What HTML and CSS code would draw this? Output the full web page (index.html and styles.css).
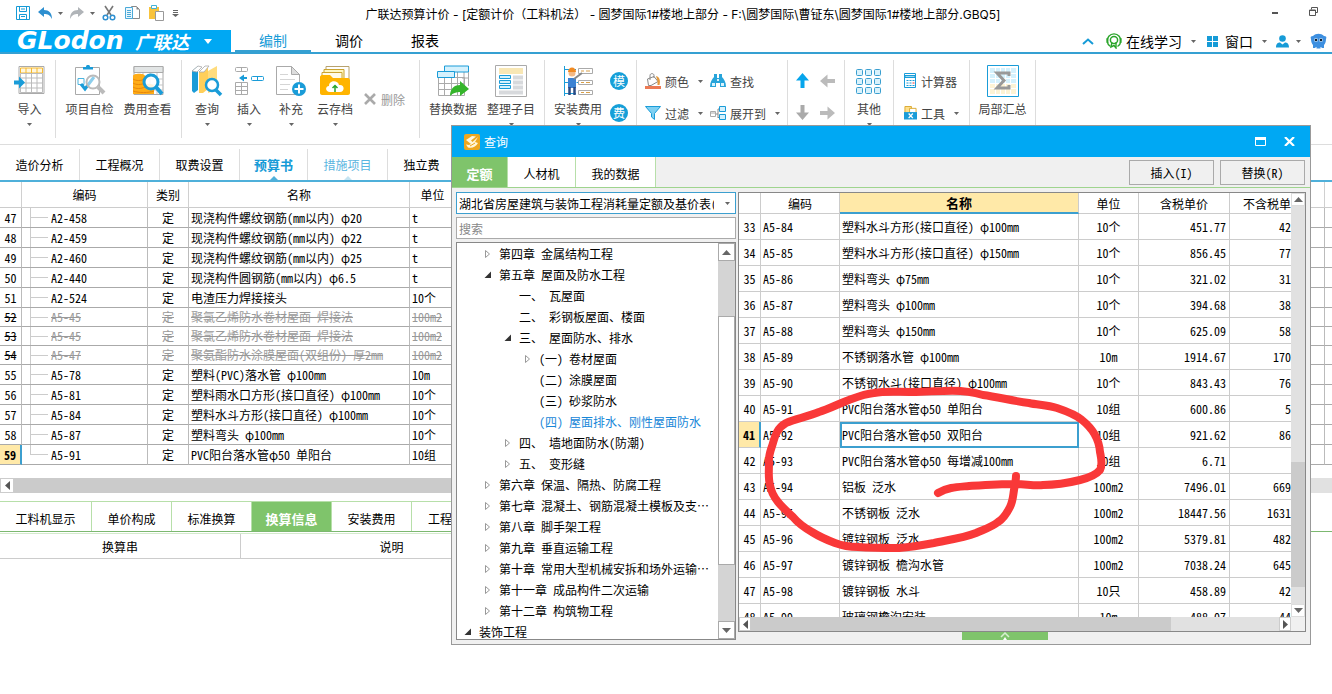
FILE: index.html
```html
<!DOCTYPE html>
<html lang="zh-CN">
<head>
<meta charset="utf-8">
<title>广联达预算计价</title>
<link rel="stylesheet" href="styles.css">
</head>
<body>
<svg class="defs" width="0" height="0" aria-hidden="true">
  <symbol id="caret" viewBox="0 0 5 3"><path d="M0 0h5L2.500 3z" fill="#666"/></symbol>
  <symbol id="shut" viewBox="0 0 8 10"><path d="M1.500 1.500v7l4-3.500z" fill="#fff" stroke="#999"/></symbol>
  <symbol id="open" viewBox="0 0 8 10"><path d="M7 1.500v6.500H.500z" fill="#333"/></symbol>
</svg>
<div class="app">
  <header class="titlebar">
    <div class="quick">
      <button aria-label="保存"><svg width="16" height="16" viewBox="0 0 16 16" fill="none" stroke="#169bd7"><path d="M1.500 1.500h13v13h-13z"/><path d="M4.500 1.500v5h7v-5M4.500 14.500v-5h7v5M6 11.500h4M6 4h4"/></svg></button>
      <button aria-label="撤销"><svg width="15" height="13" viewBox="0 0 15 13"><path d="M0 5l6-5v3c5 0 8 3 8 9-2-4-4-5-8-5v3z" fill="#2d8fd0"/></svg></button>
      <svg class="caret" width="5" height="3"><use href="#caret"/></svg>
      <button aria-label="恢复"><svg width="15" height="13" viewBox="0 0 15 13"><path d="M14 5L8 0v3C3 3 0 6 0 12c2-4 4-5 8-5v3z" fill="#b0b4b8"/></svg></button>
      <svg class="caret" width="5" height="3"><use href="#caret"/></svg>
      <button class="wide" aria-label="剪切"><svg width="14" height="16" viewBox="0 0 14 16" fill="none"><path d="M3 1l6 9M11 1L5 10" stroke="#777" stroke-width="1.600"/><circle cx="3.500" cy="12.500" r="2.300" stroke="#2d8fd0" stroke-width="1.500"/><circle cx="10.500" cy="12.500" r="2.300" stroke="#2d8fd0" stroke-width="1.500"/></svg></button>
      <button class="wide" aria-label="复制"><svg width="16" height="16" viewBox="0 0 16 16"><path d="M7.500 1.500h5l3 3v9h-8z" fill="#fff" stroke="#888"/><path d="M12.500 1.500v3h3z" fill="#888"/><path d="M1.500 2.500h7v11h-7z" fill="#eaf7fd" stroke="#4ba9d8"/><path d="M3 5.500h4M3 7.500h4M3 9.500h4M3 11.500h4" stroke="#4ba9d8"/></svg></button>
      <button class="wide" aria-label="粘贴"><svg width="16" height="16" viewBox="0 0 16 16"><path d="M1 2h10v12H1z" fill="#f8c33c"/><path d="M3.500.500h5v3h-5z" fill="#fff" stroke="#42b3d8"/><path d="M7.500 6.500h8v9h-8z" fill="#fff" stroke="#999"/></svg></button>
      <button aria-label="更多"><svg width="7" height="7" viewBox="0 0 7 7"><path d="M1 .500h5M1 2.500h5" stroke="#666"/><path d="M0 4h7L3.500 7z" fill="#666"/></svg></button>
    </div>
    <h1>广联达预算计价 - [定额计价（工料机法） - 圆梦国际1#楼地上部分 - F:\圆梦国际\曹钲东\圆梦国际1#楼地上部分.GBQ5]</h1>
    <div class="winctl">
      <button aria-label="最小化"><svg width="7" height="8" viewBox="0 0 7 8"><path d="M0 5h6v2H0z" fill="#555"/></svg></button>
      <button aria-label="还原"><svg width="9" height="9" viewBox="0 0 9 9" fill="none" stroke="#555"><path d="M2.500 2.500v-2h6v5h-2"/><path d="M.500 3h6v5.500h-6z"/><path d="M.500 3.500h6"/></svg></button>
    </div>
  </header>

  <nav class="menubar">
    <button class="brand"><span class="brand-en">GLodon</span><span class="brand-cn">广联达</span><svg width="8" height="5" viewBox="0 0 8 5"><path d="M0 0h8L4 5z" fill="#fff"/></svg></button>
    <div class="maintabs">
      <button class="on">编制</button><button>调价</button><button>报表</button>
    </div>
    <div class="tools">
      <button class="t-up" aria-label="收起"><svg width="12" height="7" viewBox="0 0 12 7" fill="none"><path d="M1 6l5-4.500L11 6" stroke="#169bd7" stroke-width="2"/></svg></button>
      <button class="t-learn"><svg width="16" height="16" viewBox="0 0 16 16" fill="none" stroke="#2ba52b"><path d="M4.500 13.500A6.800 6.800 0 1 1 11.500 13.500" stroke-width="1.400"/><circle cx="8" cy="7" r="3.600" stroke-width="1.500"/><path d="M1.500 5v5M14.500 5v5" stroke-width="1.800"/><path d="M6 9l-1 5 3-1.500L10 15v-6" stroke-width="1.400"/></svg>在线学习<svg class="caret" width="5" height="3"><use href="#caret"/></svg></button>
      <button class="t-win"><svg width="11" height="11" viewBox="0 0 11 11" fill="#169bd7"><path d="M0 0h5v5H0zM6 0h5v5H6zM0 6h5v5H0zM6 6h5v5H6z"/></svg>窗口<svg class="caret" width="5" height="3"><use href="#caret"/></svg></button>
      <button class="t-user" aria-label="用户"><svg width="13" height="13" viewBox="0 0 13 13"><circle cx="6.500" cy="3.500" r="3.300" fill="#169bd7"/><path d="M0 12.500c0-4 2-5 4-5l2.500 2L9 7.500c2 0 4 1 4 5z" fill="#169bd7"/></svg><svg class="caret" width="5" height="3"><use href="#caret"/></svg></button>
      <button aria-label="助手"><svg width="17" height="16" viewBox="0 0 17 16"><path d="M1 6c-1-2 0-3 2-3 3-3 8-3 11 0 2 0 3 1 2 3 0 3-1 5-2 6v3h-2.500v-1h-1v1.500h-4V14h-1v1H3v-3C2 11 1 9 1 6z" fill="#3d8fe0"/><circle cx="6" cy="7" r="2" fill="#bfe0ff"/><circle cx="11" cy="7" r="2" fill="#bfe0ff"/><circle cx="6" cy="7" r="1.300" fill="#123"/><circle cx="11" cy="7" r="1.300" fill="#123"/></svg></button>
    </div>
  </nav>

  <section class="ribbon">
    <div class="group g-import">
      <button class="big"><svg width="32" height="32" viewBox="0 0 32 32"><path d="M5 1.500h25v27H5z" fill="#fff" stroke="#aaa"/><path d="M6.500 3h22v5h-22z" fill="#fff6dc" stroke="#f5b82e"/><path d="M6.500 8.500h22v19h-22z" fill="none" stroke="#bbb"/><path d="M6.500 13h22M6.500 18h22M6.500 23h22M12 8v19M17.500 8v19M23 8v19" stroke="#bbb"/><path d="M12 3v5M17.500 3v5M23 3v5" stroke="#f5b82e"/><path d="M0 15.500h5v-4l6 6-6 6v-4H0z" fill="#1a9cd8"/></svg><span>导入</span><svg class="caret" width="5" height="3"><use href="#caret"/></svg></button>
    </div>
    <div class="group g-check">
      <button class="big mid"><svg width="32" height="32" viewBox="0 0 32 32"><path d="M1.500 2.500h24v27h-24z" fill="#fff" stroke="#aaa"/><path d="M9 4.500V2h3c0-3 4-3 4 0h3v2.500z" fill="#1a9cd8"/><path d="M4 13.500h6v6H4z" fill="#fff" stroke="#4bb4df"/><path d="M7 19l4 5 9-12" fill="none" stroke="#1a9cd8" stroke-width="3"/><circle cx="19" cy="17" r="6.500" fill="#fff" fill-opacity=".5" stroke="#bbb" stroke-width="2"/><path d="M24 22l6 6" stroke="#bbb" stroke-width="4"/></svg><span>项目自检</span></button>
      <button class="big mid"><svg width="32" height="32" viewBox="0 0 32 32"><path d="M2 1.500h29v28H2z" fill="#fff" stroke="#aaa"/><path d="M2 1.500h29v6H2z" fill="#e2e5e5" stroke="#aaa"/><path d="M11 8v21M18 8v21M25 8v21M11 14h20M11 20h20M11 25h20" stroke="#c5c5c5"/><path d="M1 11c0-3 12-3 12 0v8c5-1 9 0 9 3v7H1z" fill="#ffad17"/><path d="M1 14c3 2 8 2 12 0M1 18c3 2 8 2 12 0M1 22c3 2 8 2 12 0M1 26c6 2 15 2 21 0" fill="none" stroke="#e8860a"/><circle cx="19" cy="17" r="7" fill="#fff" fill-opacity=".85" stroke="#1a9cd8" stroke-width="3"/><path d="M24 22l6 7" stroke="#1a9cd8" stroke-width="4"/></svg><span>费用查看</span></button>
    </div>
    <div class="group g-query">
      <button class="big small"><svg width="32" height="32" viewBox="0 0 32 32"><path d="M1 6l6-5v24l-4 3-2-2z" fill="#1a9cd8"/><path d="M1 6l6-5 4 1-5 5z" fill="#fff" stroke="#aaa" stroke-width=".8"/><path d="M8 7l6-5 3 0v22l-5 4H8z" fill="#ffcf5a"/><path d="M17 6l9-5v24l-9 3z" fill="#ffdc7d"/><path d="M8 7l6-6h4l-5 6z" fill="#fff" stroke="#aaa" stroke-width=".8"/><circle cx="21" cy="20" r="6" fill="#fff" stroke="#1a9cd8" stroke-width="2.500"/><path d="M25 25l5 5" stroke="#1a9cd8" stroke-width="3.500"/></svg><span>查询</span><svg class="caret" width="5" height="3"><use href="#caret"/></svg></button>
      <button class="big small"><svg width="32" height="32" viewBox="0 0 32 32"><g fill="#fff" stroke="#aaa"><rect x="2.500" y="2.500" width="12" height="4" rx="1"/><path d="M8.500 2.500v4M2.500 17.500h12v12h-12zM8.500 17.500v12M2.500 21.500h12M2.500 25.500h12"/></g><path d="M6 13l5-3.500v2.500h3v2h-3v2.500z" fill="#1a9cd8"/><rect x="18.500" y="11.500" width="12" height="4" rx="1" fill="#fff" stroke="#1a9cd8"/><path d="M24.500 11.500v4" stroke="#1a9cd8"/></svg><span>插入</span><svg class="caret" width="5" height="3"><use href="#caret"/></svg></button>
      <button class="big small"><svg width="32" height="32" viewBox="0 0 32 32"><path d="M1.500 1.500h15l8 8v20h-23z" fill="#fff" stroke="#aaa"/><path d="M16.500 1.500v8h8z" fill="#ddd" stroke="#aaa"/><path d="M5 9.500h8M5 14.500h15M5 19.500h10M5 24.500h8" stroke="#d5d5d5"/><circle cx="24" cy="24" r="7" fill="#1a9cd8"/><path d="M24 19.500v9M19.500 24h9" stroke="#fff" stroke-width="2"/></svg><span>补充</span><svg class="caret" width="5" height="3"><use href="#caret"/></svg></button>
      <button class="big"><svg width="32" height="32" viewBox="0 0 32 32"><path d="M7 1.500h23V14H7z" fill="#fff" stroke="#b8a26d"/><path d="M5 4.500h20V16H5z" fill="#fff7c2" stroke="#cba431"/><path d="M3 7.500h20V18H3z" fill="#fffbe8" stroke="#cba431"/><path d="M1 12c0-1 1-2 2-2h8l3 3h15c1 0 2 1 2 2v13c0 1-1 2-2 2H3c-1 0-2-1-2-2z" fill="#ffb400"/><path d="M11 27c-5 0-5-6-1-6 0-6 9-6 10-1 6-1 6 7 1 7z" fill="#fff"/><path d="M16 27v-6M13.500 23l2.500-2.500 2.500 2.500" fill="none" stroke="#2ba52b" stroke-width="1.500"/></svg><span>云存档</span><svg class="caret" width="5" height="3"><use href="#caret"/></svg></button>
      <button class="line off"><svg width="12" height="12" viewBox="0 0 12 12"><path d="M1 1l10 10M11 1L1 11" stroke="#aaa" stroke-width="2.600"/></svg>删除</button>
    </div>
    <div class="group g-replace">
      <button class="big mid"><svg width="32" height="32" viewBox="0 0 32 32"><path d="M1.500 12.500h26v18h-26zM1.500 18.500h26M1.500 24.500h26M7.500 12v18M14.500 12v18M20.500 6v24M27 6v14" fill="none" stroke="#aaa"/><path d="M7.500 1h24v6h-24z" fill="#d4f1fd" stroke="#1a9cd8"/><path d="M31.500 7v14M25 13h6.500" stroke="#aaa" fill="none"/><path d="M.500 6.500h17v6H.500z" fill="#d4f1fd" stroke="#1a9cd8"/><path d="M13 31c0-8 5-11 10-11v-4l9 8-9 7v-4c-4 0-7 1-10 4z" fill="#35b52b"/></svg><span>替换数据</span></button>
      <button class="big mid"><svg width="32" height="32" viewBox="0 0 32 32"><path d="M.500.500h31v31H.500z" fill="#fff" stroke="#aaa"/><path d="M4 3h24v6H4z" fill="#f8e7b5"/><path d="M18 10.500h10v4H18zM18 15.500h10v4H18zM18 20.500h10v4H18zM4 25.500h24v4H4z" fill="#d7d9dc"/><path d="M4.500 10.500h11v3h-11zM4.500 15.500h11v3h-11zM4.500 20.500h11v3h-11z" fill="#d4f1fd" stroke="#1a9cd8"/></svg><span>整理子目</span><svg class="caret" width="5" height="3"><use href="#caret"/></svg></button>
    </div>
    <div class="group g-install">
      <button class="big mid"><svg width="32" height="32" viewBox="0 0 32 32"><path d="M2.500 1v30M2 4.500h12M2 17.500h5M2 28.500h12M14.500 17.500h4" fill="none" stroke="#1a9cd8"/><g fill="#fff" stroke="#aaa"><path d="M16.500 3.500h14v5h-14zM16.500 15.500h14v4h-14zM16.500 25.500h14v4h-14z"/><path d="M19 6h3M24 6h4M19 17.500h3M24 17.500h4M19 27.500h3M24 27.500h4" stroke="#d9a04a"/></g><circle cx="10" cy="8" r="3.500" fill="#f4b984"/><path d="M6 7c0-6 8-6 8 0z" fill="#f18a22"/><path d="M6 13h8v10H6z" fill="#3c82d3"/><path d="M12 14l8-6" stroke="#888" stroke-width="2"/><path d="M7.500 22v8M12.500 22v8" stroke="#2a4b84" stroke-width="2.500"/></svg><span>安装费用</span><svg class="caret" width="5" height="3"><use href="#caret"/></svg></button>
      <div class="stack"><button class="dot">模</button><button class="dot">费</button></div>
    </div>
    <div class="group g-view">
      <div class="stack">
        <button class="line"><svg width="16" height="16" viewBox="0 0 16 16"><path d="M2.500 6L9 3.500l4 5L6 12.500H3.500z" fill="#fff" stroke="#888"/><path d="M5 7V2.500C5 0 9 0 9 2.500V5" fill="none" stroke="#888"/><path d="M11 3c4 1 4.500 5 3.500 9h-2V8z" fill="#e59a3a"/><path d="M0 13h16v3H0z" fill="#ec7a54"/></svg>颜色<svg class="caret" width="5" height="3"><use href="#caret"/></svg></button>
        <button class="line"><svg width="16" height="16" viewBox="0 0 16 16"><path d="M.500 1.500h15l-6 7v6l-3-2.500V8.500z" fill="#7fd0f2" stroke="#1a9cd8"/></svg>过滤<svg class="caret" width="5" height="3"><use href="#caret"/></svg></button>
      </div>
      <div class="stack">
        <button class="line"><svg width="16" height="16" viewBox="0 0 16 16" fill="#27a4da"><path d="M4 1h3v4h2V1h3v3c2 2 4 5 4 10h-6v-4H6v4H0C0 9 2 6 4 4z"/><path d="M2 10h3v3H2zM11 10h3v3h-3zM7 6h2v2H7z" fill="#d9f2fc"/></svg>查找</button>
        <button class="line"><svg width="16" height="16" viewBox="0 0 16 16"><path d="M5 9h3M8 4v9M8 4h2M8 12.500h2" stroke="#888" fill="none"/><path d="M.500 6.500h5v5h-5z" fill="#fff" stroke="#aaa"/><path d="M9.500 1.500h6v5h-6zM9.500 9.500h6v5h-6z" fill="#d4f1fd" stroke="#1a9cd8"/><path d="M.500 8h5" stroke="#aaa"/></svg>展开到<svg class="caret" width="5" height="3"><use href="#caret"/></svg></button>
      </div>
    </div>
    <div class="group g-move">
      <div class="stack">
        <button class="move" aria-label="上移"><svg width="15" height="16" viewBox="0 0 15 16"><path d="M7.500 0L14 7.500h-4.500V15h-4V7.500H1z" fill="#06a5ec"/></svg></button>
        <button class="move" aria-label="下移"><svg width="15" height="16" viewBox="0 0 15 16"><path d="M7.500 15L14 7.500h-4.500V0h-4v7.500H1z" fill="#aaa"/></svg></button>
      </div>
      <div class="stack">
        <button class="move" aria-label="升级"><svg width="15" height="16" viewBox="0 0 15 16"><path d="M0 8l7.500-6.500V6H15v4H7.500v4.500z" fill="#bbb"/></svg></button>
        <button class="move" aria-label="降级"><svg width="15" height="16" viewBox="0 0 15 16"><path d="M15 8L7.500 1.500V6H0v4h7.500v4.500z" fill="#bbb"/></svg></button>
      </div>
    </div>
    <div class="group g-other">
      <button class="big small"><svg width="32" height="32" viewBox="0 0 32 32" fill="#d9f2fc" stroke="#3a9fd0"><g id="r"><rect x="3.500" y="4.500" width="6" height="6" rx="1"/><rect x="12.500" y="4.500" width="6" height="6" rx="1"/><rect x="21.500" y="4.500" width="6" height="6" rx="1"/></g><use href="#r" y="9"/><use href="#r" y="18"/></svg><span>其他</span><svg class="caret" width="5" height="3"><use href="#caret"/></svg></button>
    </div>
    <div class="group g-calc">
      <div class="stack">
        <button class="line"><svg width="13" height="16" viewBox="0 0 13 16"><path d="M.500.500h11v14H.500z" fill="#fff" stroke="#1a9cd8"/><path d="M1 2.500h10v2H1z" fill="#9adcf6" stroke="#1a9cd8"/><path d="M2.500 7.500h2m1 0h2m1 0h2M2.500 10h2m1 0h2M2.500 12.500h2m1 0h2m1 0h2" stroke="#1a9cd8"/><path d="M8.500 10h2" stroke="#e33"/></svg>计算器</button>
        <button class="line"><svg width="13" height="16" viewBox="0 0 14 16"><path d="M1 1h7v8H1z" fill="#ffe08a" stroke="#d9a72e"/><path d="M6 3h7v6H6z" fill="#fff" stroke="#d9a72e"/><path d="M0 7h14v8H0z" fill="#1a9cd8"/><path d="M5 8.500l4.500 5M9.500 8.500L5 13.500" stroke="#fff" stroke-width="1.400"/></svg>工具<svg class="caret" width="5" height="3"><use href="#caret"/></svg></button>
      </div>
    </div>
    <div class="group g-sum">
      <button class="big mid"><svg width="32" height="32" viewBox="0 0 32 32"><path d="M.500.500h31v31H.500z" fill="#fff" stroke="#1a9cd8"/><path d="M3 3h26v15H3z" fill="#d4f1fd"/><path d="M3 18h26v11H3z" fill="#fdf3d5"/><path d="M3 8.500h26M3 13.500h26M3 18.500h26M3 23.500h26M8.500 3v26M13.500 3v26M18.500 3v26M23.500 3v26" stroke="#fff"/><path d="M22 11V8H10l7 7.500-7 7.500h12v-3" fill="none" stroke="#999" stroke-width="3"/></svg><span>局部汇总</span></button>
    </div>
  </section>

  <nav class="pagetabs">
    <button>造价分析</button><button>工程概况</button><button>取费设置</button><button class="on">预算书</button><button class="hint">措施项目</button><button class="short">独立费</button>
  </nav>

  <main class="sheet">
    <table class="budget">
      <colgroup><col class="b-no"><col class="b-code"><col class="b-kind"><col class="b-name"><col class="b-unit"><col><col class="b-end"></colgroup>
      <thead><tr><th></th><th>编码</th><th>类别</th><th>名称</th><th>单位</th><th></th><th></th></tr></thead>
      <tbody>
        <tr><td>47</td><td><i class="branch"></i>A2-458</td><td>定</td><td>现浇构件螺纹钢筋(mm以内) φ20</td><td>t</td><td></td><td></td></tr>
        <tr><td>48</td><td><i class="branch"></i>A2-459</td><td>定</td><td>现浇构件螺纹钢筋(mm以内) φ22</td><td>t</td><td></td><td></td></tr>
        <tr><td>49</td><td><i class="branch"></i>A2-460</td><td>定</td><td>现浇构件螺纹钢筋(mm以内) φ25</td><td>t</td><td></td><td></td></tr>
        <tr><td>50</td><td><i class="branch"></i>A2-440</td><td>定</td><td>现浇构件圆钢筋(mm以内) φ6.5</td><td>t</td><td></td><td></td></tr>
        <tr><td>51</td><td><i class="branch"></i>A2-524</td><td>定</td><td>电渣压力焊接接头</td><td>10个</td><td></td><td></td></tr>
        <tr class="gone"><td><s>52</s></td><td><i class="branch"></i><s>A5-45</s></td><td><s>定</s></td><td><s>聚氯乙烯防水卷材屋面 焊接法</s></td><td><s>100m2</s></td><td></td><td></td></tr>
        <tr class="gone"><td><s>53</s></td><td><i class="branch"></i><s>A5-45</s></td><td><s>定</s></td><td><s>聚氯乙烯防水卷材屋面 焊接法</s></td><td><s>100m2</s></td><td></td><td></td></tr>
        <tr class="gone"><td><s>54</s></td><td><i class="branch"></i><s>A5-47</s></td><td><s>定</s></td><td><s>聚氨酯防水涂膜屋面(双组份) 厚2mm</s></td><td><s>100m2</s></td><td></td><td></td></tr>
        <tr><td>55</td><td><i class="branch"></i>A5-78</td><td>定</td><td>塑料(PVC)落水管 φ100mm</td><td>10m</td><td></td><td></td></tr>
        <tr><td>56</td><td><i class="branch"></i>A5-81</td><td>定</td><td>塑料雨水口方形(接口直径) φ100mm</td><td>10个</td><td></td><td></td></tr>
        <tr><td>57</td><td><i class="branch"></i>A5-84</td><td>定</td><td>塑料水斗方形(接口直径) φ100mm</td><td>10个</td><td></td><td></td></tr>
        <tr><td>58</td><td><i class="branch"></i>A5-87</td><td>定</td><td>塑料弯头 φ100mm</td><td>10个</td><td></td><td></td></tr>
        <tr class="cur"><td>59</td><td><i class="branch last"></i>A5-91</td><td>定</td><td>PVC阳台落水管φ50 单阳台</td><td>10组</td><td></td><td></td></tr>
      </tbody>
    </table>
    <div class="hbar main-bar"><span class="arrow"><svg width="5" height="9" viewBox="0 0 5 9"><path d="M5 0v9L0 4.500z" fill="#555"/></svg></span><span class="thumb"></span><span class="rest"></span></div>
    <nav class="subtabs">
      <button class="first">工料机显示</button><button>单价构成</button><button>标准换算</button><button class="on">换算信息</button><button>安装费用</button><button class="more">工程</button>
    </nav>
    <table class="detail">
      <colgroup><col class="d-str"><col class="d-desc"><col></colgroup>
      <thead><tr><th>换算串</th><th>说明</th><th></th></tr></thead>
    </table>
  </main>

  <section class="dialog" role="dialog" aria-label="查询">
    <header class="dlg-title">
      <svg width="16" height="16" viewBox="0 0 16 16"><rect width="16" height="16" rx="2" fill="#eda71f"/><path d="M2 6l6-4 4 .500-5 4 1.500 1.500L14 3l-3 5 3 1c-2 4-6 5.500-10 4.500l-2-3 3 .500 2-1z" fill="#fff6da"/><path d="M6 12l5-3" stroke="#eda71f"/></svg>
      <h2>查询</h2>
      <button aria-label="最大化"><svg width="11" height="9" viewBox="0 0 11 9"><path d="M.500.500h10v8H.500z" fill="none" stroke="#fff"/><path d="M0 0h11v3H0z" fill="#fff"/></svg></button>
      <button aria-label="关闭"><svg width="11" height="9" viewBox="0 0 11 9"><path d="M1 0l9 9M10 0L1 9" stroke="#fff" stroke-width="2.200"/></svg></button>
    </header>
    <div class="dlg-tabs">
      <button class="tab on">定额</button><button class="tab t-res">人材机</button><button class="tab t-mine">我的数据</button>
      <div class="actions"><button>插入(I)</button><button>替换(R)</button></div>
    </div>
    <div class="dlg-body">
      <div class="side">
        <div class="pick"><select aria-label="定额库"><option>湖北省房屋建筑与装饰工程消耗量定额及基价表(</option></select><svg class="caret" width="5" height="3"><use href="#caret"/></svg></div>
        <input class="search" type="text" aria-label="搜索" placeholder="搜索">
        <div class="treebox">
          <ul class="tree">
            <li class="l1"><svg width="8" height="10"><use href="#shut"/></svg>第四章 金属结构工程</li>
            <li class="l1"><svg width="8" height="10"><use href="#open"/></svg>第五章 屋面及防水工程</li>
            <li class="l2"><i></i>一、 瓦屋面</li>
            <li class="l2"><i></i>二、 彩钢板屋面、楼面</li>
            <li class="l2"><svg width="8" height="10"><use href="#open"/></svg>三、 屋面防水、排水</li>
            <li class="l3"><svg width="8" height="10"><use href="#shut"/></svg>(一) 卷材屋面</li>
            <li class="l3"><i></i>(二) 涂膜屋面</li>
            <li class="l3"><i></i>(三) 砂浆防水</li>
            <li class="l3 sel"><i></i>(四) 屋面排水、刚性屋面防水</li>
            <li class="l2"><svg width="8" height="10"><use href="#shut"/></svg>四、 墙地面防水(防潮)</li>
            <li class="l2"><svg width="8" height="10"><use href="#shut"/></svg>五、 变形缝</li>
            <li class="l1"><svg width="8" height="10"><use href="#shut"/></svg>第六章 保温、隔热、防腐工程</li>
            <li class="l1"><svg width="8" height="10"><use href="#shut"/></svg>第七章 混凝土、钢筋混凝土模板及支…</li>
            <li class="l1"><svg width="8" height="10"><use href="#shut"/></svg>第八章 脚手架工程</li>
            <li class="l1"><svg width="8" height="10"><use href="#shut"/></svg>第九章 垂直运输工程</li>
            <li class="l1"><svg width="8" height="10"><use href="#shut"/></svg>第十章 常用大型机械安拆和场外运输…</li>
            <li class="l1"><svg width="8" height="10"><use href="#shut"/></svg>第十一章 成品构件二次运输</li>
            <li class="l1"><svg width="8" height="10"><use href="#shut"/></svg>第十二章 构筑物工程</li>
            <li class="l0"><svg width="8" height="10"><use href="#open"/></svg>装饰工程</li>
          </ul>
          <div class="vbar tree-bar"><span class="arrow"><svg width="9" height="5" viewBox="0 0 9 5"><path d="M0 5h9L4.500 0z" fill="#666"/></svg></span><span class="track-a"></span><span class="thumb"></span><span class="track-b"></span><span class="arrow"><svg width="9" height="5" viewBox="0 0 9 5"><path d="M0 0h9L4.500 5z" fill="#666"/></svg></span></div>
        </div>
      </div>
      <div class="results">
        <div class="gridbox">
          <div class="clip">
          <table class="quota">
            <colgroup><col class="q-no"><col class="q-code"><col><col class="q-unit"><col class="q-price"><col class="q-net"></colgroup>
            <thead><tr><th></th><th>编码</th><th class="key">名称</th><th>单位</th><th>含税单价</th><th class="cut">不含税单</th></tr></thead>
            <tbody>
              <tr><td>33</td><td>A5-84</td><td>塑料水斗方形(接口直径) φ100mm</td><td>10个</td><td>451.77</td><td>42</td></tr>
              <tr><td>34</td><td>A5-85</td><td>塑料水斗方形(接口直径) φ150mm</td><td>10个</td><td>856.45</td><td>77</td></tr>
              <tr><td>35</td><td>A5-86</td><td>塑料弯头 φ75mm</td><td>10个</td><td>321.02</td><td>31</td></tr>
              <tr><td>36</td><td>A5-87</td><td>塑料弯头 φ100mm</td><td>10个</td><td>394.68</td><td>38</td></tr>
              <tr><td>37</td><td>A5-88</td><td>塑料弯头 φ150mm</td><td>10个</td><td>625.09</td><td>58</td></tr>
              <tr><td>38</td><td>A5-89</td><td>不锈钢落水管 φ100mm</td><td>10m</td><td>1914.67</td><td>170</td></tr>
              <tr><td>39</td><td>A5-90</td><td>不锈钢水斗(接口直径) φ100mm</td><td>10个</td><td>843.43</td><td>76</td></tr>
              <tr><td>40</td><td>A5-91</td><td>PVC阳台落水管φ50 单阳台</td><td>10组</td><td>600.86</td><td>5</td></tr>
              <tr class="cur"><td>41</td><td>A5-92</td><td>PVC阳台落水管φ50 双阳台</td><td>10组</td><td>921.62</td><td>86</td></tr>
              <tr><td>42</td><td>A5-93</td><td>PVC阳台落水管φ50 每增减100mm</td><td>10组</td><td>6.71</td><td></td></tr>
              <tr><td>43</td><td>A5-94</td><td>铝板 泛水</td><td>100m2</td><td>7496.01</td><td>669</td></tr>
              <tr><td>44</td><td>A5-95</td><td>不锈钢板 泛水</td><td>100m2</td><td>18447.56</td><td>1631</td></tr>
              <tr><td>45</td><td>A5-96</td><td>镀锌钢板 泛水</td><td>100m2</td><td>5379.81</td><td>482</td></tr>
              <tr><td>46</td><td>A5-97</td><td>镀锌钢板 檐沟水管</td><td>100m2</td><td>7038.24</td><td>645</td></tr>
              <tr><td>47</td><td>A5-98</td><td>镀锌钢板 水斗</td><td>10只</td><td>458.89</td><td>42</td></tr>
              <tr><td>48</td><td>A5-99</td><td>玻璃钢檐沟安装</td><td>10m</td><td>488.07</td><td>44</td></tr>
            </tbody>
          </table>
          </div>
          <div class="vbar grid-v"><span class="arrow"><svg width="9" height="5" viewBox="0 0 9 5"><path d="M0 5h9L4.500 0z" fill="#666"/></svg></span><span class="track-a"></span><span class="thumb"></span><span class="track-b"></span><span class="arrow"><svg width="9" height="5" viewBox="0 0 9 5"><path d="M0 0h9L4.500 5z" fill="#666"/></svg></span></div>
          <div class="hbar grid-h"><span class="arrow"><svg width="5" height="9" viewBox="0 0 5 9"><path d="M5 0v9L0 4.500z" fill="#555"/></svg></span><span class="thumb"></span><span class="rest"></span><span class="arrow"><svg width="5" height="9" viewBox="0 0 5 9"><path d="M0 0v9l5-4.500z" fill="#555"/></svg></span></div>
        </div>
        <button class="fold" aria-label="展开"><svg width="10" height="8" viewBox="0 0 10 8"><path d="M1 5l4-4 4 4" fill="none" stroke="#d8f0d0" stroke-width="1.500"/><path d="M3 8l2-3 2 3z" fill="#fff"/></svg></button>
      </div>
    </div>
    <svg class="ink" width="350" height="174" viewBox="760 382 350 174" aria-hidden="true"><path d="M938 493C948 487 958 487 969 486C985 485 1000 484 1014 484C1025 484 1035 486 1043 485C1055 485 1068 483 1080 480C1088 478 1096 475 1100 470C1103 464 1101 457 1100 452C1099 438 1092 428 1082 420C1075 414 1066 411 1057 408C1047 405 1038 405 1029 403C1013 401 998 397 983 395C970 391 957 390 943 391C932 391 920 392 909 392C897 392 885 391 874 393C864 394 857 397 849 400C838 404 829 409 819 412C807 417 794 419 786 423C777 428 775 436 773 443C771 450 768 456 769 463C769 471 768 478 770 485C772 498 782 507 793 517C798 523 805 528 812 532C820 537 827 540 835 543C843 546 850 547 858 547C872 548 885 548 899 548C911 547 923 545 934 543C948 540 963 538 976 533C985 529 992 527 998 522C1003 519 1007 513 1010 507C1013 501 1013 496 1014 490C1015 485 1016 480 1016 476"/></svg>
  </section>
</div>
</body>
</html>
```
FILE: styles.css
```css
* { box-sizing: border-box; }
body { margin: 0; background: #fff; }
body, button, input, select {
  font-family: "Noto Sans Mono CJK SC", "Noto Sans CJK SC", "Liberation Mono", monospace;
  font-size: 12px;
  color: #000;
}
button { border: 0; margin: 0; padding: 0; background: none; white-space: nowrap; }
svg { display: block; flex: none; }
h1, h2 { margin: 0; font-size: 12px; font-weight: 400; }
.defs { position: absolute; }

.app { position: relative; display: flex; flex-direction: column; height: 100vh; overflow: hidden; }

/* title bar */
.titlebar, .menubar, .ribbon, .ribbon button, .maintabs button, .t-learn, .t-win { font-family: "Noto Sans CJK SC", sans-serif; }
.titlebar { display: flex; align-items: center; height: 30px; padding: 0 14px 4px 15px; }
.titlebar h1 { flex: 1; text-align: center; font-family: Inter, "Noto Sans CJK SC", sans-serif; white-space: nowrap; }
.quick { display: flex; align-items: center; gap: 7px; width: 163px; }
.quick .caret { margin-left: -2px; }
.quick .wide { margin-right: 1px; }
.winctl { display: flex; align-items: center; gap: 30px; padding-bottom: 4px; margin-left: 84px; }

/* menu bar */
.menubar { display: flex; height: 24px; border-bottom: 2px solid #35a0d2; }
.brand { display: flex; align-items: center; width: 231px; padding-left: 17px; background: #00a8f3; color: #fff; line-height: 22px; }
.brand-en { width: 118px; font: italic 700 25px/22px "DejaVu Sans", sans-serif; color: #fff; text-align: left; }
.brand-cn { width: 69px; font: italic 700 18px/22px "Noto Sans CJK SC", sans-serif; text-align: left; }
.maintabs { display: flex; margin-left: 4px; }
.maintabs button { width: 76px; font-size: 14px; line-height: 20px; border-bottom: 2px solid transparent; }
.maintabs .on { color: #169bd7; border-color: #35a0d2; }
.tools { display: flex; align-items: center; margin-left: auto; padding-right: 5px; gap: 9px; }
.tools button { display: flex; align-items: center; gap: 4px; font-size: 14px; line-height: 22px; }
.tools .t-learn { margin: 0 2px 0 3px; }
.tools .t-win, .tools .t-user { gap: 7px; }
.t-learn .caret { margin-left: 5px; }
.t-win .caret { margin-left: 2px; }

/* ribbon */
.ribbon { display: flex; height: 91px; padding: 6px 0; border-bottom: 1px solid #ddd; }
.group { display: flex; justify-content: center; border-right: 1px solid #ddd; }
.ribbon button { color: #444; }
.g-import { width: 56px; padding-left: 4px; }
.g-check { width: 126px; }
.g-query { width: 238px; justify-content: flex-start; padding-left: 4px; }
.g-replace { width: 125px; }
.g-install { width: 92px; justify-content: flex-start; padding-left: 4px; }
.g-view { width: 151px; justify-content: flex-start; padding-left: 8px; gap: 7px; }
.g-move { width: 57px; gap: 10px; padding-right: 2px; }
.g-other { width: 49px; }
.g-calc { width: 76px; justify-content: flex-start; padding-left: 10px; }
.g-sum { width: 66px; }
.big { display: flex; flex-direction: column; align-items: center; width: 46px; padding-top: 5px; }
.big.mid { width: 58px; }
.big.small { width: 42px; }
.big span { line-height: 18px; margin: 3px 0 5px; }
.line { display: flex; align-items: center; gap: 4px; height: 20px; }
.line .caret { margin-left: 5px; }
.off { align-self: center; gap: 5px; margin-left: 6px; }
.ribbon .off { color: #999; }
.stack { display: flex; flex-direction: column; gap: 12px; padding-top: 11px; }
.ribbon .dot { width: 18px; height: 18px; margin: 1px 0 1px 3px; border-radius: 9px; background: #169fd8; color: #fff; line-height: 18px; text-align: center; }
.move { height: 20px; }

/* page tabs */
.pagetabs { display: flex; height: 37px; padding-top: 4px; border-bottom: 2px solid #4fb0da; }
.pagetabs button { position: relative; width: 80px; border-right: 1px solid #ddd; }
.pagetabs .short { width: 68px; }
.pagetabs .on { width: 68px; color: #169bd7; font-weight: 700; font-size: 13px; }
.pagetabs .hint { color: #5ab5e0; }
.pagetabs .on::after, .pagetabs .hint::after { content: ""; position: absolute; left: 50%; bottom: 0; margin-left: -4px; border: 4px solid transparent; border-top: 0; border-bottom-color: #4fb0da; }
.pagetabs .hint::after { border-bottom-color: #c5e4f2; }

/* budget table */
.sheet { flex: 1; }
table { width: 100%; table-layout: fixed; border-collapse: separate; border-spacing: 0; }
th, td { padding: 0; overflow: hidden; white-space: nowrap; font-weight: 400; line-height: 19px; }
.budget th { height: 26px; border-right: 1px solid #d0d0d0; border-bottom: 1px solid #ccc; }
.budget td { height: 20px; border-right: 1px solid #bbb; border-bottom: 1px solid #aaa; padding-left: 2px; }
.budget td:nth-child(1), .budget td:nth-child(3) { text-align: center; padding: 0; }
.budget td:nth-child(2) { padding-left: 8px; }
.budget td:last-child, .budget th:last-child { border-right: 0; }
.budget .gone td { height: 19px; line-height: 18px; color: #999; }
.budget .gone td:first-child { color: #000; }
.budget .cur td:first-child { background: #ffe9a8; font-weight: 700; border-right: 2px solid #3c9fcf; }
.b-no { width: 22px; } .b-code { width: 126px; } .b-kind { width: 41px; } .b-name { width: 221px; } .b-unit { width: 46px; } .b-end { width: 7px; }
.branch { display: inline-block; vertical-align: top; width: 18px; height: 19px; margin-right: 3px; border-left: 1px solid #ccc; background: linear-gradient(#ccc, #ccc) 0 9px / 18px 1px no-repeat; }
.gone .branch { height: 18px; }
.branch.last { height: 10px; }

/* scroll bars */
.hbar { display: flex; height: 14px; background: #e1e1e1; }
.hbar .arrow { display: flex; align-items: center; justify-content: center; width: 12px; background: #fff; border: 1px solid #ccc; }
.hbar .thumb { background: #cbcbcb; }
.hbar .rest { flex: 1; }
.main-bar { height: 15px; margin-top: 13px; }
.main-bar .arrow { width: 14px; }
.main-bar .thumb { width: 60%; }
.vbar { display: flex; flex-direction: column; background: #e1e1e1; }
.vbar .arrow { display: flex; align-items: center; justify-content: center; height: 18px; background: #fff; border: 1px solid #aaa; }

/* lower tabs */
.subtabs { display: flex; height: 31px; margin-top: 8px; border-bottom: 1px solid #7cb870; }
.subtabs button { width: 80px; padding-top: 3px; border-top: 1px solid #b7dfa9; border-right: 1px solid #b7dfa9; }
.subtabs .first { width: 92px; }
.subtabs .more { text-align: left; padding-left: 16px; }
.subtabs .on { background: #7fc46b; color: #fff; font-weight: 700; font-size: 13px; }
.detail { width: 60%; margin-top: 1px; border-top: 1px solid #d4ebcd; }
.detail th { height: 25px; border-right: 1px solid #ccc; border-bottom: 1px solid #ccc; }
.d-str { width: 241px; } .d-desc { width: 302px; }

/* query dialog */
.dialog { position: absolute; left: 451px; right: 21px; top: 125px; bottom: 49px; display: flex; flex-direction: column; border: 1px solid #999; background: #f0f0f0; }
.dlg-title { display: flex; align-items: center; gap: 18px; height: 31px; padding: 0 15px 0 12px; background: #00a8f3; }
.dlg-title h2 { flex: 1; margin-left: -14px; color: #fff; }
.dlg-tabs { display: flex; height: 31px; border-bottom: 1px solid #9fd48e; }
.tab { background: #fff; border-right: 1px solid #b7dfa9; padding-top: 3px; }
.tab.on { width: 56px; background: #7fc46b; color: #fff; font-weight: 700; font-size: 13px; }
.t-res { width: 68px; }
.t-mine { width: 80px; }
.actions { display: flex; gap: 6px; margin-left: auto; padding: 3px 5px 2px 0; }
.actions button { width: 85px; border: 1px solid #aaa; }
.dlg-body { flex: 1; display: grid; grid-template-columns: 280px 1fr; gap: 2px; padding: 4px; min-height: 0; }
.side { display: flex; flex-direction: column; gap: 3px; min-height: 0; }
.pick { display: flex; align-items: center; height: 22px; border: 1px solid #3c9fcf; background: #fff; padding-right: 5px; }
.pick select { flex: 1; min-width: 0; height: 20px; margin-right: 11px; padding: 0 0 0 2px; border: 0; background: none; appearance: none; }
.search { height: 22px; width: 100%; border: 1px solid #aaa; padding: 0 2px; }
.search::placeholder { color: #888; opacity: 1; }
.treebox { flex: 1; display: flex; min-height: 0; border: 1px solid #888; background: #fff; overflow: hidden; }
.tree { flex: 1; list-style: none; margin: 0; padding: 0; min-width: 0; }
.tree li { display: flex; align-items: center; gap: 7px; height: 21px; white-space: nowrap; }
.tree i { width: 8px; }
.l0 { padding-left: 7px; } .l1 { padding-left: 27px; } .l2 { padding-left: 47px; } .l3 { padding-left: 67px; }
.tree .sel { color: #1787d8; }
.tree-bar { width: 17px; background: #d4d4d4; }
.tree-bar .track-a { flex: 55; }
.tree-bar .thumb { flex: 250; background: #fff; border: 1px solid #aaa; }
.tree-bar .track-b { flex: 56; }

.results { display: flex; flex-direction: column; min-width: 0; min-height: 0; }
.gridbox { flex: 1; display: grid; grid-template: minmax(0, 1fr) 14px / minmax(0, 1fr) 14px; min-height: 0; border: 1px solid #888; background: #f0f0f0; }
.clip { overflow: hidden; background: #fff; }
.quota th { height: 21px; line-height: 19px; border-right: 1px solid #ccc; border-bottom: 1px solid #ccc; }
.quota td { height: 26px; border-right: 1px solid #ccc; border-bottom: 1px solid #ccc; text-align: center; }
.quota th:last-child, .quota td:last-child { border-right: 0; }
.quota .key { background: #ffe9a8; border-bottom: 2px solid #3c9fcf; font-weight: 700; font-size: 13px; }
.quota .cut { text-align: right; }
.quota td:nth-child(2), .quota td:nth-child(3) { text-align: left; padding-left: 2px; }
.quota td:nth-child(5) { text-align: right; padding-right: 3px; }
.quota td:nth-child(6) { text-align: right; }
.quota .cur td:first-child { background: #ffe9a8; font-weight: 700; border-right: 2px solid #3c9fcf; }
.quota .cur td:nth-child(3) { outline: 2px solid #3c9fcf; outline-offset: -2px; }
.q-no { width: 22px; } .q-code { width: 79px; } .q-unit { width: 60px; } .q-price { width: 91px; } .q-net { width: 61px; }
.grid-v .arrow { height: 13px; border-color: #ddd; }
.grid-v .track-a { flex: 257; }
.grid-v .thumb { flex: 125; background: #cbcbcb; }
.grid-v .track-b { flex: 17; }
.grid-h .thumb { width: 76%; }
.fold { display: flex; justify-content: center; align-self: center; width: 86px; height: 8px; margin-right: 34px; background: #7fc46b; }

.ink { position: absolute; left: 308px; top: 256px; pointer-events: none; }
.ink path { fill: none; stroke: #f93838; stroke-width: 8; stroke-linecap: round; stroke-linejoin: round; }
```
